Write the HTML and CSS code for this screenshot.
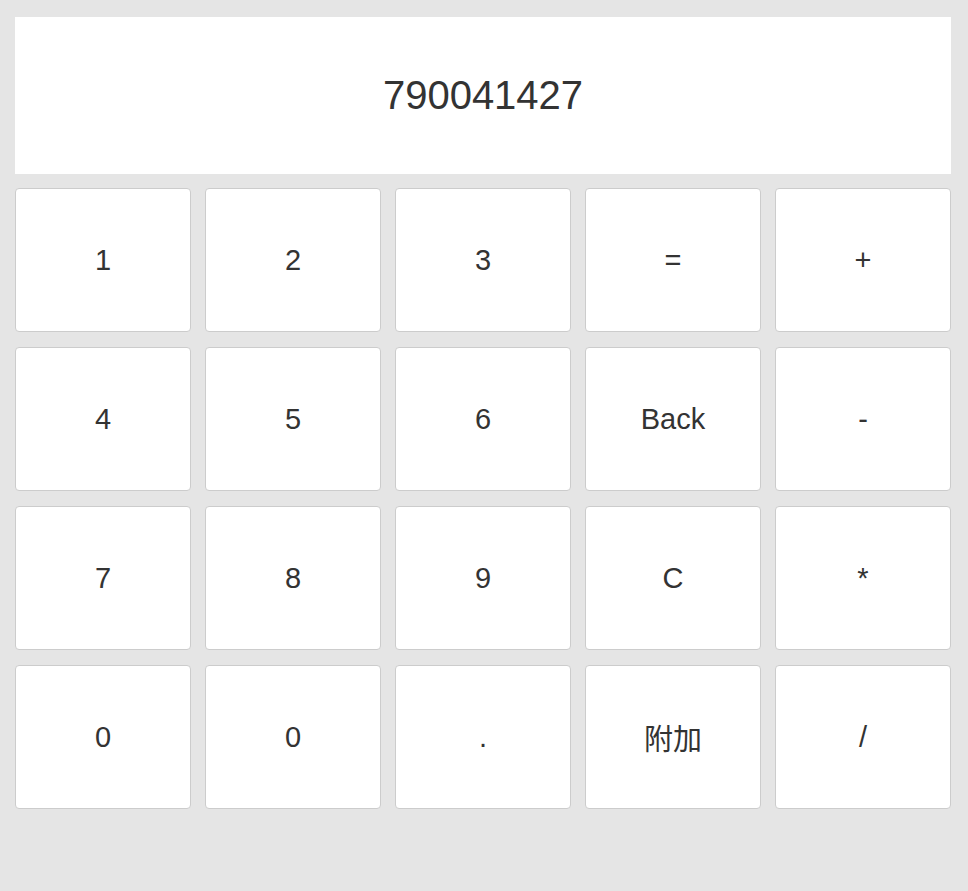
FILE: index.html
```html
<!DOCTYPE html>
<html lang="zh">
<head>
<meta charset="utf-8">
<title>Calculator</title>
<link rel="stylesheet" href="styles.css">
</head>
<body>
<div class="calc">
  <div class="display">790041427</div>
  <div class="keys">
    <button class="key">1</button>
    <button class="key">2</button>
    <button class="key">3</button>
    <button class="key">=</button>
    <button class="key">+</button>
    <button class="key">4</button>
    <button class="key">5</button>
    <button class="key">6</button>
    <button class="key">Back</button>
    <button class="key">-</button>
    <button class="key">7</button>
    <button class="key">8</button>
    <button class="key">9</button>
    <button class="key">C</button>
    <button class="key">*</button>
    <button class="key">0</button>
    <button class="key">0</button>
    <button class="key">.</button>
    <button class="key">附加</button>
    <button class="key">/</button>
  </div>
</div>
</body>
</html>
```
FILE: styles.css
```css
html, body {
  margin: 0;
  padding: 0;
  background: #e5e5e5;
  height: 100%;
}
body {
  font-family: "Liberation Sans", Arial, "Noto Sans CJK SC", sans-serif;
  color: #333;
}
.calc {
  padding: 17px 17px 0 15px;
}
.display {
  height: 157px;
  background: #fff;
  display: flex;
  align-items: center;
  justify-content: center;
  font-size: 40px;
}
.keys {
  margin-top: 14px;
  display: grid;
  grid-template-columns: repeat(5, 176px);
  grid-auto-rows: 144px;
  column-gap: 14px;
  row-gap: 15px;
}
.key {
  margin: 0;
  padding: 0;
  background: #fff;
  border: 1px solid #ccc;
  border-radius: 4px;
  font-family: "Liberation Sans", Arial, "Noto Sans CJK SC", sans-serif;
  font-size: 29px;
  color: #333;
}
```
